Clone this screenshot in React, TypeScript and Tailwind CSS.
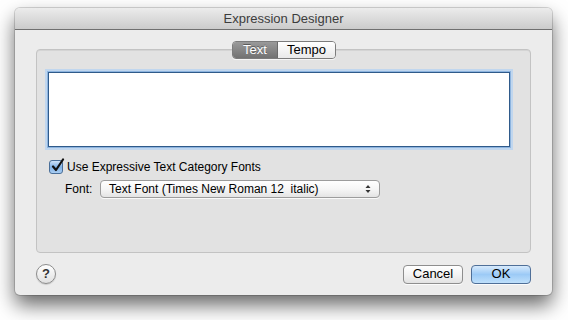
import React from "react";

const font = "font-['Lucida_Grande','Liberation_Sans',Arial,sans-serif]";

const CheckBox: React.FC = () => (
  <div className="w-[14px] h-[14px] rounded-[3px] border border-[#4a6f99] bg-gradient-to-b from-[#cfe3f8] via-[#7fb1e6] to-[#a9cdf2] relative">
    <svg className="absolute -top-[3px] left-[1px]" width="14" height="15" viewBox="0 0 14 15">
      <path d="M2 8.5 L5 12 L12 1.5" fill="none" stroke="#111" strokeWidth="2.2" strokeLinecap="round" strokeLinejoin="round" />
    </svg>
  </div>
);

const PushButton: React.FC<{ label: string; primary?: boolean }> = ({ label, primary }) => (
  <div
    className={
      "w-[60px] h-[19px] rounded-[4px] border flex items-center justify-center text-[13px] text-black shadow-[0_1px_0_rgba(255,255,255,0.8)] " +
      (primary
        ? "border-[#4f6f98] bg-gradient-to-b from-[#d7eafc] via-[#9ccaf6] to-[#bfe0fb]"
        : "border-[#8e8e8e] bg-gradient-to-b from-white via-[#f3f3f3] to-[#e2e2e2]")
    }
  >
    {label}
  </div>
);

export default function App() {
  return (
    <div className={`w-[568px] h-[320px] bg-white pt-[8px] pl-[15px] ${font}`}>
      <div className="w-[537px] h-[287px] rounded-[5px] bg-[#ececec] shadow-[0_10px_20px_rgba(0,0,0,0.6),0_0_0_1px_rgba(0,0,0,0.15)] flex flex-col overflow-hidden">
        {/* title bar */}
        <div className="h-[22px] shrink-0 bg-gradient-to-b from-[#ececec] to-[#cbcbcb] border-b border-[#6f6f6f] flex items-center justify-center text-[13px] text-[#3c3c3c]">
          Expression Designer
        </div>

        {/* group box */}
        <div className="relative mt-[19px] mx-[21px] h-[204px] rounded-[4px] border border-[#c3c3c3] bg-[#e2e2e2] shadow-[inset_0_1px_0_rgba(0,0,0,0.06)]">
          <div className="absolute -top-[9px] left-[195px] flex h-[18px] rounded-[4px] border border-[#7c7c7c] overflow-hidden text-[13px] shadow-[0_1px_0_rgba(255,255,255,0.7)]">
            <div className="w-[45px] flex items-center justify-center bg-gradient-to-b from-[#9a9a9a] to-[#727272] text-white [text-shadow:0_-1px_0_rgba(0,0,0,0.4)] border-r border-[#6a6a6a]">
              Text
            </div>
            <div className="w-[57px] flex items-center justify-center bg-gradient-to-b from-white to-[#e9e9e9] text-black">
              Tempo
            </div>
          </div>

          {/* text area */}
          <div className="mt-[22px] ml-[11px] w-[462px] h-[75px] bg-white border border-[#2f5a8a] shadow-[0_0_0_1px_#8db4df,0_0_0_3px_#c0d6ee]" />

          {/* checkbox row */}
          <div className="mt-[11px] ml-[12px] flex items-center gap-[4px] text-[12px] text-black">
            <CheckBox />
            <span>Use Expressive Text Category Fonts</span>
          </div>

          {/* font popup row */}
          <div className="mt-[4px] ml-[28px] flex items-center text-[12px] text-black">
            <span className="w-[35px]">Font:</span>
            <div className="w-[280px] h-[18px] rounded-[4px] border border-[#9c9c9c] bg-gradient-to-b from-white via-[#f6f6f6] to-[#e4e4e4] flex items-center justify-between pl-[8px] pr-[8px] shadow-[0_1px_0_rgba(255,255,255,0.8)]">
              <span>Text Font (Times New Roman 12&nbsp;&nbsp;italic)</span>
              <svg width="6" height="10" viewBox="0 0 6 10">
                <path d="M0.5 4 L3 1 L5.5 4 Z" fill="#333" />
                <path d="M0.5 6 L3 9 L5.5 6 Z" fill="#333" />
              </svg>
            </div>
          </div>
        </div>

        {/* bottom row */}
        <div className="mt-[11px] mx-[21px] flex items-center">
          <div className="w-[20px] h-[20px] rounded-full border border-[#8c8c8c] bg-gradient-to-b from-white to-[#e0e0e0] flex items-center justify-center text-[13px] font-bold text-[#333] shadow-[0_1px_1px_rgba(0,0,0,0.15)]">
            ?
          </div>
          <div className="ml-auto flex gap-[8px]">
            <PushButton label="Cancel" />
            <PushButton label="OK" primary />
          </div>
        </div>
      </div>
    </div>
  );
}
